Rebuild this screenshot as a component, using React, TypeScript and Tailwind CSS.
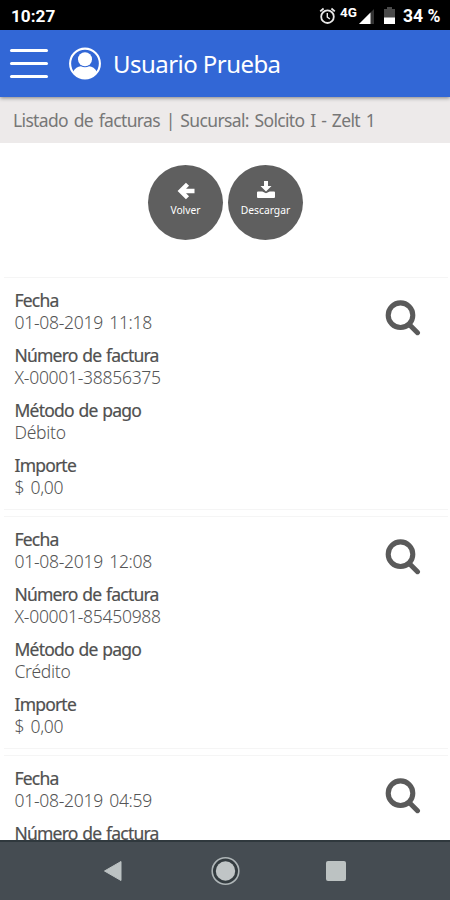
interface Factura {
  fecha: string;
  numero?: string;
  metodo?: string;
  importe?: string;
}

const facturas: Factura[] = [
  { fecha: '01-08-2019 11:18', numero: 'X-00001-38856375', metodo: 'Débito', importe: '$ 0,00' },
  { fecha: '01-08-2019 12:08', numero: 'X-00001-85450988', metodo: 'Crédito', importe: '$ 0,00' },
  { fecha: '01-08-2019 04:59' },
];

function StatusBar() {
  return (
    <div className="flex h-[30px] shrink-0 items-center bg-black pl-[11px] pr-[10px] font-['Roboto',sans-serif] text-white">
      <span className="mt-[3px] text-[17.2px] font-bold leading-none">10:27</span>
      <div className="ml-auto flex items-center">
        {/* Alarm */}
        <svg className="mt-[1px] h-[18px] w-[17px]" viewBox="0 0 17 18" fill="none" stroke="#e8e8e8">
          <circle cx="8.5" cy="9.7" r="6.3" strokeWidth="1.8" />
          <path d="M1.2 4.4 4.6 1.5M15.8 4.4 12.4 1.5" strokeWidth="1.8" />
          <path d="M8.3 6v4.2l2.6 1.8" strokeWidth="1.4" />
        </svg>
        <span className="mb-[4px] ml-[4px] w-[19px] text-[13.5px] font-bold leading-none">4G</span>
        {/* Signal */}
        <svg className="mt-[2px] h-[15px] w-[16px]" viewBox="0 0 16 15">
          <path d="M15 0v15H0z" fill="#333" />
          <path d="M11.5 3.5V15H0z" fill="#fff" />
        </svg>
        {/* Battery */}
        <svg className="ml-[9px] mt-[1px] h-[17px] w-[11px]" viewBox="0 0 11 17">
          <path d="M3 0h5v2h3v9H0V2h3z" fill="#4a4a4a" />
          <path d="M0 10.5h11V17H0z" fill="#fff" />
        </svg>
        <span className="ml-[8px] mt-[3px] w-[37px] whitespace-nowrap text-[17.5px] font-bold leading-none">34 %</span>
      </div>
    </div>
  );
}

function Header() {
  return (
    <header className="relative z-10 flex h-[67px] shrink-0 items-center bg-[#3267d6] shadow-[0_1px_4px_rgba(0,0,0,0.45)]">
      <div className="ml-[10px] flex w-[38px] flex-col gap-[10px]">
        <span className="h-[3px] rounded-full bg-white" />
        <span className="h-[3px] rounded-full bg-white" />
        <span className="h-[3px] rounded-full bg-white" />
      </div>
      <svg className="ml-[21px] h-[33px] w-[32px]" viewBox="0 0 32 33">
        <circle cx="16" cy="16.5" r="14.9" fill="none" stroke="#fff" strokeWidth="2.1" />
        <circle cx="16" cy="12.3" r="7" fill="#fff" />
        <path d="M4.3 24.5c1.3-3.3 4.7-4.8 7.5-5.3 2.6 1.5 5.8 1.5 8.4 0 2.8.5 6.2 2 7.5 5.3C25.2 28.6 21 31.3 16 31.3S6.8 28.6 4.3 24.5z" fill="#fff" />
      </svg>
      <h1 className="ml-[12px] whitespace-nowrap text-[24px] leading-none tracking-[-0.55px] text-white">Usuario Prueba</h1>
    </header>
  );
}

function SearchIcon() {
  return (
    <svg className="h-[36px] w-[36px]" viewBox="0 0 36 36" fill="none" stroke="#5a5a5a">
      <circle cx="15.5" cy="15.2" r="12.3" strokeWidth="5.1" />
      <path d="M24.5 24.7 32.5 32.7" strokeWidth="5" strokeLinecap="round" />
    </svg>
  );
}

function Field({ label, value }: { label: string; value?: string }) {
  return (
    <div className="mb-[11px] whitespace-nowrap leading-[22px]">
      <p className="text-[17.5px] tracking-[-0.8px] text-[#505050] [-webkit-text-stroke:0.2px_#505050] [word-spacing:1px]">{label}</p>
      {value && <p className="text-[17.5px] font-light tracking-[-0.28px] text-[#555] [word-spacing:2px]">{value}</p>}
    </div>
  );
}

function FacturaCard({ factura }: { factura: Factura }) {
  return (
    <article className="mb-[6px] ml-[4px] mr-[2px] flex h-[233px] shrink-0 justify-between border-y border-[#f5f5f5] pl-[10.5px] pr-[27px] pt-[11px]">
      <div>
        <Field label="Fecha" value={factura.fecha} />
        <Field label="Número de factura" value={factura.numero} />
        {factura.metodo && <Field label="Método de pago" value={factura.metodo} />}
        {factura.importe && <Field label="Importe" value={factura.importe} />}
      </div>
      <div className="pt-[10.5px]">
        <SearchIcon />
      </div>
    </article>
  );
}

function NavBar() {
  return (
    <nav className="flex h-[60px] shrink-0 items-center border-t-2 border-[#2f383d] bg-[#454c52]">
      <svg className="ml-[103px] h-[22px] w-[20px]" viewBox="0 0 20 22">
        <path d="M1.5 11 18 1.5v19z" fill="#bcc2c3" stroke="#bcc2c3" strokeLinejoin="round" />
      </svg>
      <svg className="ml-[88px] h-[30px] w-[29px]" viewBox="0 0 29 30">
        <circle cx="14.5" cy="15" r="13.3" fill="#343c40" stroke="#aeb5b7" strokeWidth="1.6" />
        <circle cx="14.5" cy="15" r="9.7" fill="#c0c5c6" />
      </svg>
      <span className="ml-[86px] h-[20px] w-[20px] rounded-[2px] bg-[#bcc2c2]" />
    </nav>
  );
}

export default function App() {
  return (
    <div className="flex h-[900px] w-[450px] flex-col overflow-hidden bg-white font-['Noto_Sans',sans-serif]">
      <StatusBar />
      <Header />
      <div className="flex h-[46px] shrink-0 items-center bg-[#edeaea] pl-[13px] pt-[2px]">
        <p className="whitespace-nowrap text-[17.5px] leading-none tracking-[-0.65px] text-[#777] [word-spacing:1.8px]">
          Listado de facturas | Sucursal: Solcito I - Zelt 1
        </p>
      </div>

      <div className="flex h-[134px] shrink-0 justify-center gap-[5px] pl-[1px] pt-[22px] text-white">
        <button className="flex h-[75px] w-[75px] flex-col items-center rounded-full bg-[#5f5f5f] pt-[17px]">
          <svg className="h-[18px] w-[18px]" viewBox="0 0 18 18" fill="none" stroke="#fff" strokeWidth="4.4">
            <path d="M10.5 2.2 3.7 9l6.8 6.8M4 9H17.5" />
          </svg>
          <span className="mt-[5px] text-[10.3px] leading-none">Volver</span>
        </button>
        <button className="flex h-[75px] w-[75px] flex-col items-center rounded-full bg-[#5f5f5f] pt-[16px]">
          <svg className="h-[18px] w-[18px]" viewBox="0 0 18 18" fill="#fff">
            <path d="M7 0h4v5h3.5L9 10.5 3.5 5H7z" />
            <path d="M1 10.5h4.3L9 12.3l3.7-1.8H17q1 0 1 1v4.5q0 1-1 1H1q-1 0-1-1v-4.5q0-1 1-1z" />
          </svg>
          <span className="mt-[6px] text-[10.3px] leading-none">Descargar</span>
        </button>
      </div>

      <main className="flex min-h-0 flex-1 flex-col overflow-hidden">
        {facturas.map((factura) => (
          <FacturaCard key={factura.fecha} factura={factura} />
        ))}
      </main>
      <NavBar />
    </div>
  );
}
